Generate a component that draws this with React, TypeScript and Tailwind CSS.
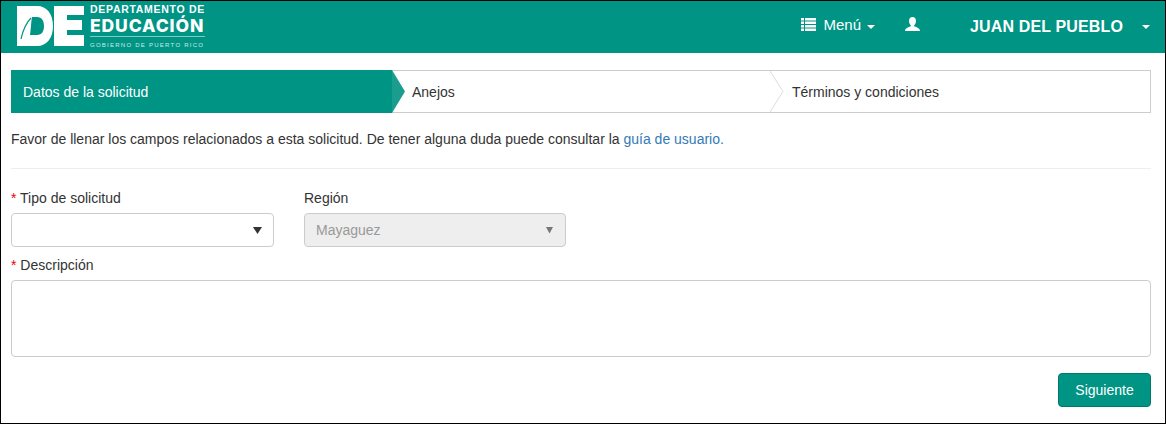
function Caret() {
  return <span className="block h-0 w-0 border-x-4 border-t-4 border-x-transparent border-t-white" />;
}

function SelectBox({ value, disabled }: { value?: string; disabled?: boolean }) {
  return (
    <div
      className={`flex h-[34px] items-center justify-between rounded-[4px] border border-[#ccc] pl-[11px] pr-[11px] text-[14px] ${
        disabled ? "bg-[#eee] text-[#999]" : "bg-white"
      }`}
    >
      <span>{value}</span>
      {disabled ? (
        <svg width="9" height="8" viewBox="0 0 9 8">
          <path d="M1 1h7L4.500 7.500z" fill="#777" />
        </svg>
      ) : (
        <svg width="9" height="8" viewBox="0 0 9 8">
          <path d="M0 1h9L4.500 8z" fill="#333" />
        </svg>
      )}
    </div>
  );
}

function Logo() {
  return (
    <div className="flex items-start">
      <svg width="67" height="40" viewBox="0 0 67 40" className="mt-[5px]">
        <path
          fillRule="evenodd"
          fill="#fff"
          d="M0 0H20C30 0 36 8 36 20S30 40 20 40H0ZM15 11H20C25 11 27 15 27 20S25 29 20 29H13C14 22 14 16 15 11Z"
        />
        <path d="M4 33C6 24 9 17 14 12" fill="none" stroke="#009485" strokeWidth="1.200" />
        <path fill="#fff" d="M37 0H67V9H50V14H65V24H50V29H67V40H37Z" />
      </svg>
      <div className="ml-[6px] mt-[3px] w-[115px] text-white">
        <div className="whitespace-nowrap text-[10.5px] font-bold leading-[11px] tracking-[0.7px]">DEPARTAMENTO DE</div>
        <div className="mt-[1px] whitespace-nowrap font-['Inter',sans-serif] text-[17.5px] font-extrabold leading-[20px] tracking-[0.9px]">EDUCACIÓN</div>
        <div className="border-t border-[#7fcac2] pt-[5px] text-[6px] leading-[7px] tracking-[1.25px] text-[#cfeae7] whitespace-nowrap">
          GOBIERNO DE PUERTO RICO
        </div>
      </div>
    </div>
  );
}

function ListIcon() {
  return (
    <svg width="15" height="13" viewBox="0 0 15 13" fill="#fff">
      <path d="M0 0h3v2.500H0zM4 0h11v2.500H4zM0 3.500h3V6H0zM4 3.500h11V6H4zM0 7h3v2.500H0zM4 7h11v2.500H4zM0 10.500h3V13H0zM4 10.500h11V13H4z" />
    </svg>
  );
}

function UserIcon() {
  return (
    <svg width="15" height="14" viewBox="0 0 15 14" fill="#fff">
      <path d="M7.500 0C10 0 11 1.800 11 4c0 1.800-.8 3.300-1.800 4.200v1C10.500 10 15 10.500 15 14H0c0-3.500 4.500-4 5.800-4.800v-1C4.800 7.300 4 5.800 4 4c0-2.200 1-4 3.500-4z" />
    </svg>
  );
}

export default function App() {
  return (
    <div className="h-[424px] w-[1166px] overflow-hidden border border-black bg-white font-['Liberation_Sans',Arial,sans-serif] text-[14px] leading-5 text-[#333]">
      {/* Barra superior */}
      <header className="flex h-[52px] items-start justify-between bg-[#009485] pl-[16px] pr-[15px] text-white">
        <Logo />
        <div className="flex items-start">
          <span className="mt-[17px]">
            <ListIcon />
          </span>
          <span className="ml-[8px] mt-[14px] text-[15px]">Menú</span>
          <span className="ml-[6px] mt-[24px]">
            <Caret />
          </span>
          <span className="ml-[30px] mt-[16px]">
            <UserIcon />
          </span>
          <span className="ml-[50px] mt-[16px] text-[16px] font-bold tracking-[0.14px]">JUAN DEL PUEBLO</span>
          <span className="ml-[19px] mt-[24px]">
            <Caret />
          </span>
        </div>
      </header>

      <main className="pl-[10px] pr-[14px] pt-[17px]">
        {/* Pasos */}
        <div className="flex h-[43px] border border-[#ccc]">
          <div className="relative -my-px -ml-px flex w-[381px] items-center bg-[#009485] pl-3 text-white">
            Datos de la solicitud
            <svg className="absolute left-full top-0" width="13" height="43" viewBox="0 0 13 43">
              <path d="M0 0l13 21.500L0 43z" fill="#1a9c8e" />
            </svg>
          </div>
          <div className="relative flex w-[378px] items-center pl-5">
            Anejos
            <svg className="absolute left-full top-0" width="14" height="41" viewBox="0 0 14 41">
              <path d="M0 0l13 20.500L0 41" fill="#fff" stroke="#ddd" />
            </svg>
          </div>
          <div className="flex flex-1 items-center pl-[22px]">Términos y condiciones</div>
        </div>

        <p className="mt-4">
          Favor de llenar los campos relacionados a esta solicitud. De tener alguna duda puede consultar la{" "}
          <a className="text-[#337ab7]">guía de usuario.</a>
        </p>

        <hr className="mt-[19px] border-[#eee]" />

        {/* Formulario */}
        <div className="mt-[19px] flex gap-[30px]">
          <div className="w-[263px]">
            <label className="mb-[5px] block">
              <span className="text-[#e00]">*</span> Tipo de solicitud
            </label>
            <SelectBox />
          </div>
          <div className="w-[262px]">
            <label className="mb-[5px] block">Región</label>
            <SelectBox value="Mayaguez" disabled />
          </div>
        </div>

        <label className="mt-[8px] block">
          <span className="text-[#e00]">*</span> Descripción
        </label>
        <div className="mt-[5px] h-[77px] rounded-[4px] border border-[#ccc]" />

        <div className="mt-4 flex justify-end">
          <button className="h-[34px] w-[93px] rounded-[4px] border border-[#00796c] bg-[#009485] text-white">
            Siguiente
          </button>
        </div>
      </main>
    </div>
  );
}
